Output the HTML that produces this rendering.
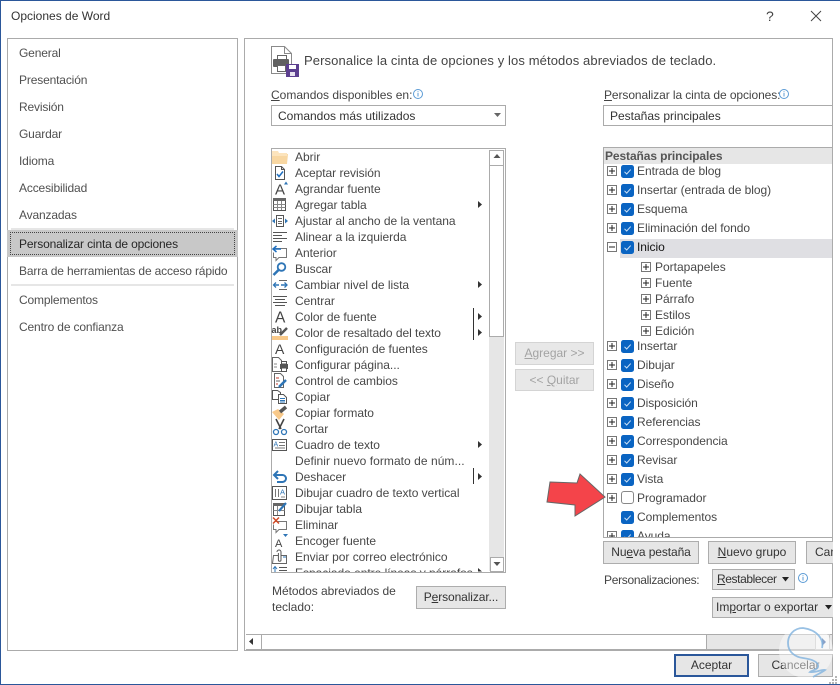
<!DOCTYPE html>
<html lang="es"><head><meta charset="utf-8"><title>Opciones de Word</title>
<style>
html,body{margin:0;padding:0;background:#fff}
#w{position:relative;width:840px;height:685px;overflow:hidden;background:#fff;font:12px/16px "Liberation Sans",sans-serif;color:#444}
#w div{position:absolute;box-sizing:border-box}
.t,.r,.n,.b{white-space:nowrap}
.t{height:16px}
.l{left:19px;height:16px;color:#505050;letter-spacing:-.15px}
.r{left:23px;height:16px;color:#484848;letter-spacing:-.03px}
.n{left:33px;height:16px;color:#484848;letter-spacing:-.05px}
.c{left:51px;height:16px;color:#484848}
.b{border:1px solid #adadad;background:#e6e6e6;color:#333;text-align:center;line-height:20px}
.box{border:1px solid #ababab;background:#fff}
u{text-decoration:underline}
svg{position:absolute;left:0;top:0}
</style></head><body><div id="w">
<div style="left:0;top:0;width:840px;height:1px;background:#2b579a"></div>
<div style="left:0;top:0;width:1px;height:685px;background:#2b579a"></div>
<div style="left:0;top:684px;width:840px;height:1px;background:#2b579a"></div>
<div class="t" style="left:11px;top:8px;color:#333">Opciones de Word</div>

<div class="box" style="left:7px;top:38px;width:231px;height:613px"></div>
<div style="left:11px;top:228px;width:223px;height:2px;background:#e6e6e6"></div>
<div style="left:7px;top:230px;width:231px;height:27px;background:#c8c8c8"></div>
<div style="left:10px;top:232px;width:225px;height:23px;border:1px dotted #444"></div>
<div style="left:11px;top:284px;width:223px;height:2px;background:#e6e6e6"></div>
<div class="t l" style="top:45px">General</div>
<div class="t l" style="top:72px">Presentación</div>
<div class="t l" style="top:99px">Revisión</div>
<div class="t l" style="top:126px">Guardar</div>
<div class="t l" style="top:153px">Idioma</div>
<div class="t l" style="top:180px">Accesibilidad</div>
<div class="t l" style="top:207px">Avanzadas</div>
<div class="t l" style="top:236px;color:#262626">Personalizar cinta de opciones</div>
<div class="t l" style="top:263px">Barra de herramientas de acceso rápido</div>
<div class="t l" style="top:292px">Complementos</div>
<div class="t l" style="top:319px">Centro de confianza</div>

<div class="box" style="left:244px;top:38px;width:589px;height:613px"></div>
<div class="t" style="left:304px;top:53px;font-size:13px;letter-spacing:.11px;color:#444">Personalice la cinta de opciones y los métodos abreviados de teclado.</div>
<div class="t" style="left:271px;top:87px"><u>C</u>omandos disponibles en:</div>
<div class="box" style="left:271px;top:105px;width:235px;height:21px"></div>
<div class="t" style="left:278px;top:108px;color:#333">Comandos más utilizados</div>

<div class="box" style="left:271px;top:148px;width:235px;height:425px"></div>
<div style="left:489px;top:150px;width:15px;height:421px;background:#e6e6e6"></div>
<div style="left:489px;top:150px;width:15px;height:16px;background:#fff;border:1px solid #ababab"></div>
<div style="left:489px;top:165px;width:15px;height:172px;background:#fff;border:1px solid #ababab"></div>
<div style="left:490px;top:557px;width:14px;height:15px;background:#fff;border:1px solid #ababab"></div>

<div style="left:272px;top:149px;width:216px;height:423px;overflow:hidden">
<div class="r" style="top:0">Abrir</div>
<div class="r" style="top:16px">Aceptar revisión</div>
<div class="r" style="top:32px">Agrandar fuente</div>
<div class="r" style="top:48px">Agregar tabla</div>
<div class="r" style="top:64px">Ajustar al ancho de la ventana</div>
<div class="r" style="top:80px">Alinear a la izquierda</div>
<div class="r" style="top:96px">Anterior</div>
<div class="r" style="top:112px">Buscar</div>
<div class="r" style="top:128px">Cambiar nivel de lista</div>
<div class="r" style="top:144px">Centrar</div>
<div class="r" style="top:160px">Color de fuente</div>
<div class="r" style="top:176px">Color de resaltado del texto</div>
<div class="r" style="top:192px">Configuración de fuentes</div>
<div class="r" style="top:208px">Configurar página...</div>
<div class="r" style="top:224px">Control de cambios</div>
<div class="r" style="top:240px">Copiar</div>
<div class="r" style="top:256px">Copiar formato</div>
<div class="r" style="top:272px">Cortar</div>
<div class="r" style="top:288px">Cuadro de texto</div>
<div class="r" style="top:304px;letter-spacing:.05px">Definir nuevo formato de núm...</div>
<div class="r" style="top:320px">Deshacer</div>
<div class="r" style="top:336px">Dibujar cuadro de texto vertical</div>
<div class="r" style="top:352px">Dibujar tabla</div>
<div class="r" style="top:368px">Eliminar</div>
<div class="r" style="top:384px">Encoger fuente</div>
<div class="r" style="top:400px">Enviar por correo electrónico</div>
<div class="r" style="top:416px">Espaciado entre líneas y párrafos</div>
</div>

<div class="b" style="left:515px;top:342px;width:79px;height:23px;color:#a3a3a3;border-color:#d4d4d4;background:#e8e8e8"><u>A</u>gregar &gt;&gt;</div>
<div class="b" style="left:515px;top:369px;width:79px;height:22px;color:#a3a3a3;border-color:#d4d4d4;background:#e8e8e8">&lt;&lt; <u>Q</u>uitar</div>

<div class="t" style="left:272px;top:583px;letter-spacing:-.05px">Métodos abreviados de</div>
<div class="t" style="left:272px;top:599px">teclado:</div>
<div class="b" style="left:416px;top:586px;width:90px;height:23px;letter-spacing:-.1px"><span>P<u>e</u>rsonalizar...</span></div>

<div class="t" style="left:604px;top:87px;letter-spacing:-.09px"><u>P</u>ersonalizar la cinta de opciones:</div>
<div class="box" style="left:603px;top:105px;width:230px;height:21px"></div>
<div class="t" style="left:610px;top:108px;color:#333">Pestañas principales</div>

<div style="left:603px;top:147px;width:230px;height:391px;border:1px solid #ababab;overflow:hidden;background:#fff">
<div style="left:0;top:0;width:228px;height:16px;background:#e6e6e6"></div>
<div class="t" style="left:1px;top:0;font-weight:bold;color:#555;letter-spacing:-.1px">Pestañas principales</div>
<div style="left:16px;top:91px;width:212px;height:19px;background:#dfdfe3"></div>
<div class="n" style="top:15px">Entrada de blog</div>
<div class="n" style="top:34px">Insertar (entrada de blog)</div>
<div class="n" style="top:53px">Esquema</div>
<div class="n" style="top:72px">Eliminación del fondo</div>
<div class="n" style="top:91px;color:#111">Inicio</div>
<div class="c" style="top:111px">Portapapeles</div>
<div class="c" style="top:127px">Fuente</div>
<div class="c" style="top:143px">Párrafo</div>
<div class="c" style="top:159px">Estilos</div>
<div class="c" style="top:175px">Edición</div>
<div class="n" style="top:190px">Insertar</div>
<div class="n" style="top:209px">Dibujar</div>
<div class="n" style="top:228px">Diseño</div>
<div class="n" style="top:247px">Disposición</div>
<div class="n" style="top:266px">Referencias</div>
<div class="n" style="top:285px">Correspondencia</div>
<div class="n" style="top:304px">Revisar</div>
<div class="n" style="top:323px">Vista</div>
<div class="n" style="top:342px">Programador</div>
<div class="n" style="top:361px">Complementos</div>
<div class="n" style="top:380px">Ayuda</div>
</div>

<div class="b" style="left:603px;top:541px;width:96px;height:23px;letter-spacing:-.1px">Nu<u>e</u>va pestaña</div>
<div class="b" style="left:708px;top:541px;width:88px;height:23px"><u>N</u>uevo grupo</div>
<div style="left:806px;top:541px;width:27px;height:23px;overflow:hidden;border:1px solid #adadad;border-right:0;background:#e6e6e6;color:#333;line-height:21px;padding-left:8px">Cambiar</div>
<div class="t" style="left:604px;top:572px;letter-spacing:-.3px">Personalizaciones:</div>
<div class="b" style="left:712px;top:569px;width:83px;height:21px;text-align:left;padding-left:4px;line-height:19px;letter-spacing:-.4px"><u>R</u>establecer</div>
<div style="left:712px;top:597px;width:121px;height:21px;overflow:hidden;border:1px solid #adadad;border-right:0;background:#e6e6e6;color:#333;line-height:19px;padding-left:3px;white-space:nowrap">Im<u>p</u>ortar o exportar</div>

<div style="left:246px;top:634px;width:586px;height:16px;background:#e6e6e6;border-top:1px solid #ababab;border-bottom:1px solid #ababab"></div>
<div style="left:246px;top:634px;width:15px;height:16px;background:#fff;border-top:1px solid #ababab;border-bottom:1px solid #ababab"></div>
<div style="left:261px;top:634px;width:446px;height:16px;background:#fff;border:1px solid #ababab"></div>
<div style="left:815px;top:634px;width:15px;height:16px;background:#f2f2f2;border:1px solid #c4c4c4"></div>

<div class="b" style="left:674px;top:654px;width:75px;height:23px;border:2px solid #2b579a;line-height:19px">Aceptar</div>
<div class="b" style="left:758px;top:654px;width:75px;height:23px;line-height:21px">Cancelar</div>

<svg width="840" height="685" viewBox="0 0 840 685" fill="none">
<defs>
<g id="ex"><rect x=".5" y=".5" width="9" height="9" fill="#fff" stroke="#777"/><path d="M2 5h6M5 2v6" stroke="#222"/></g>
<g id="mn"><rect x=".5" y=".5" width="9" height="9" fill="#fff" stroke="#777"/><path d="M2 5h6" stroke="#222"/></g>
<g id="ck"><rect x="0" y="0" width="13" height="13" rx="2.500" fill="#0a64c2"/><path d="M3.500 6.800l2.200 2.200 4-4.400" stroke="#cfe3f7" stroke-width="1"/></g>
<path id="ar" d="M0 0l4 3.500-4 3.500z" fill="#333"/>
<g id="inf"><circle cx="5" cy="5" r="4.500" stroke="#5b9bd5"/><path d="M5 4v3.500M5 2.200v1" stroke="#5b9bd5"/></g>
</defs>

<!-- window buttons -->
<text x="766" y="21" font-family="Liberation Sans" font-size="14" fill="#444">?</text>
<path d="M811 11l10 10M821 11l-10 10" stroke="#444"/>

<!-- header icon -->
<path d="M271.500 46.500h13l7 7v20h-20z" fill="#fff" stroke="#8a8a8a"/>
<path d="M284.500 46.500v7h7" stroke="#8a8a8a"/>
<rect x="277.500" y="55.500" width="9" height="4" fill="#fff" stroke="#666"/>
<rect x="273" y="59" width="16" height="8" rx="1" fill="#606060"/>
<rect x="277.500" y="65.500" width="8" height="6" fill="#fff" stroke="#666"/>
<rect x="286" y="64" width="13" height="13" fill="#5c3f8f"/>
<rect x="289" y="65" width="7" height="4" fill="#fff"/>
<rect x="290" y="72" width="5" height="4" fill="#e8e3f0"/>

<!-- dropdown arrows -->
<path d="M494 113h7l-3.500 4z" fill="#666"/>
<path d="M493.500 158l3.500-4 3.500 4z" fill="#555"/>
<path d="M493.500 562h7l-3.500 4z" fill="#555"/>
<path d="M782 577h7l-3.500 4.500z" fill="#222"/>
<path d="M825 605h7l-3.500 4.500z" fill="#222"/>
<path d="M253 638l-4 3.500 4 3.500" fill="#333"/>
<path d="M822 638l4 4-4 4z" fill="#2b579a"/>
<use href="#inf" x="413" y="89"/>
<use href="#inf" x="779" y="89"/>
<use href="#inf" x="798" y="573"/>

<!-- list submenu arrows -->
<use href="#ar" x="478" y="201"/>
<use href="#ar" x="478" y="281"/>
<use href="#ar" x="478" y="313"/>
<use href="#ar" x="478" y="329"/>
<use href="#ar" x="478" y="441"/>
<use href="#ar" x="478" y="473"/>
<path d="M478 568l4 3.500h-4z" fill="#333"/>
<path d="M473.500 308v32M473.500 468v16" stroke="#333"/>

<!-- list icons -->
<g transform="translate(272,149)"><path d="M0 3h6l1 2h9l-1 10H0z" fill="#f8d7a2"/><path d="M0 7V2h6l1 2h8v3z" fill="#fce4bd"/></g>
<g transform="translate(272,165)"><path d="M3.500 1.500h6l3 3v10h-9z" fill="#fff" stroke="#555"/><path d="M9.500 1.500v3h3" stroke="#555"/><path d="M5 9l2 2.500 4-5" stroke="#1f6fbf" stroke-width="1.500"/></g>
<g transform="translate(272,181)"><text x="3" y="13.500" font-family="Liberation Sans" font-size="15" fill="#444">A</text><path d="M12 3.500l2-3 2 3z" fill="#2e75b6"/></g>
<g transform="translate(272,197)"><rect x="1.500" y="1.500" width="12" height="12" fill="#fff" stroke="#555"/><rect x="1" y="1" width="13" height="3" fill="#666"/><path d="M1.500 7.500h12M1.500 10.500h12M5.500 4v9M9.500 4v9" stroke="#888"/></g>
<g transform="translate(272,213)"><path d="M3 5.500L0 8l3 2.500zM13 5.500L16 8l-3 2.500z" fill="#2e75b6"/><rect x="4.500" y="2.500" width="7" height="11" fill="#fff" stroke="#555"/><path d="M6 5.500h4M6 8.500h4M6 10.500h4" stroke="#666"/></g>
<path transform="translate(272,229)" d="M1 3.500h14M1 6.500h9M1 9.500h14M1 12.500h9" stroke="#555"/>
<g transform="translate(272,245)"><path d="M3 3.500h11.500v9H7l-3 3v-3H1.500v-5" fill="#fff" stroke="#777"/><path d="M1 4h8" stroke="#1f6fbf" stroke-width="1.500"/><path d="M4.500 1L1 4l3.500 3" stroke="#1f6fbf" stroke-width="1.500"/></g>
<g transform="translate(272,261)"><circle cx="9.500" cy="6" r="3.800" stroke="#2e75b6" stroke-width="1.800"/><path d="M6.500 9l-5 5" stroke="#2e75b6" stroke-width="2.500"/></g>
<g transform="translate(272,277)"><path d="M7 3.500h8M7 12.500h8" stroke="#666"/><path d="M2 8h5M9 8h6" stroke="#2e75b6" stroke-width="1.400"/><path d="M4 5.500L1.500 8 4 10.500M12.500 5.500L15 8l-2.500 2.500" stroke="#2e75b6" stroke-width="1.300"/></g>
<path transform="translate(272,293)" d="M1 3.500h14M3 6.500h10M1 9.500h14M3 12.500h10" stroke="#555"/>
<g transform="translate(272,309)"><text x="3" y="13.500" font-family="Liberation Sans" font-size="15.500" fill="#444">A</text></g>
<g transform="translate(272,325)"><rect x="0" y="11" width="16" height="4" fill="#f8c98a"/><text x="-.5" y="8" font-family="Liberation Sans" font-size="9" font-weight="bold" fill="#444">ab</text><path d="M8 10l7-7" stroke="#555" stroke-width="2.500"/></g>
<g transform="translate(272,341)"><text x="3" y="13" font-family="Liberation Sans" font-size="14" fill="#444">A</text></g>
<g transform="translate(272,357)"><path d="M.5.500h6l3 3v11h-9z" fill="#fff" stroke="#666"/><rect x="8" y="7" width="8" height="5" fill="#555"/><rect x="9.500" y="4.500" width="5" height="2.500" fill="#fff" stroke="#555"/><rect x="9.500" y="11" width="5" height="3.500" fill="#fff" stroke="#555"/><path d="M2 7h3M2 10h3" stroke="#888"/></g>
<g transform="translate(272,373)"><path d="M2.500.5h6l3 3v11h-9z" fill="#fff" stroke="#666"/><path d="M4 5h3" stroke="#c0392b"/><path d="M4 8h4" stroke="#666"/><path d="M4 11h2" stroke="#c0392b"/><path d="M7 14l7-7" stroke="#2e75b6" stroke-width="2.500"/></g>
<g transform="translate(272,389)"><path d="M.5 1.500h5l3 2v7h-8z" fill="#fff" stroke="#555"/><path d="M6.500 5.500h5l3 3v6h-8z" fill="#fff" stroke="#555"/><path d="M8 9.500h5M8 11.500h5M8 13h5" stroke="#2e75b6"/></g>
<g transform="translate(272,405)"><path d="M0 7l6-3 6 5-5 6z" fill="#f8c98a"/><path d="M8 7l6-5" stroke="#555" stroke-width="3.500"/></g>
<g transform="translate(272,421)"><path d="M4-2l5 10M12-2L7 8" stroke="#444" stroke-width="1.600"/><circle cx="4" cy="11" r="2.500" stroke="#2e75b6" stroke-width="1.300"/><circle cx="12" cy="11" r="2.500" stroke="#2e75b6" stroke-width="1.300"/></g>
<g transform="translate(272,437)"><rect x=".5" y="2.500" width="14" height="11" fill="#fff" stroke="#555"/><text x="1.500" y="9.500" font-family="Liberation Sans" font-size="7" fill="#2e75b6">A</text><path d="M7 5.500h6M7 8.500h6M3 11h10" stroke="#777"/></g>
<g transform="translate(272,469)"><path d="M3 6h7.500a3.500 3.500 0 0 1 0 7H5" stroke="#2e75b6" stroke-width="2"/><path d="M6 2L2 6l4 4" stroke="#2e75b6" stroke-width="2"/></g>
<g transform="translate(272,485)"><rect x=".5" y="1.500" width="14" height="13" fill="#fff" stroke="#555"/><path d="M3.500 4v8M6.500 4v8" stroke="#777"/><text x="8" y="9.500" font-family="Liberation Sans" font-size="7.500" fill="#2e75b6">A</text><path d="M9 12h4" stroke="#888"/></g>
<g transform="translate(272,501)"><rect x="1.500" y="2.500" width="11" height="12" fill="#fff" stroke="#555"/><rect x="1" y="2" width="12" height="3" fill="#666"/><path d="M5.500 5v9M1.500 9.500h11" stroke="#888"/><path d="M7 10l7-8" stroke="#2e75b6" stroke-width="2.200"/></g>
<g transform="translate(272,517)"><path d="M3 4.500h11.500v8H7l-3 3v-3H1.500v-5" fill="#fff" stroke="#777"/><path d="M1 .5l6 6M7 .5l-6 6" stroke="#d04a26" stroke-width="1.500"/></g>
<g transform="translate(272,533)"><text x="3" y="14" font-family="Liberation Sans" font-size="11" fill="#444">A</text><path d="M11 1h5l-2.500 3z" fill="#2e75b6"/></g>
<g transform="translate(272,549)"><path d="M1.500 6.500h13v8h-14z" fill="#fff" stroke="#666"/><path d="M5 3a2 2 0 0 1 4 0v8a1.300 1.300 0 0 1-2.600 0V4" fill="#fff" stroke="#555"/><path d="M11 8h3" stroke="#2e75b6"/></g>
<g transform="translate(272,565)"><path d="M3 7V2M1 4l2-2.500L5 4" stroke="#2e75b6"/><path d="M7 2.500h8M7 5.500h8" stroke="#555"/></g>

<!-- tree -->
<use href="#ex" x="607" y="166"/><use href="#ck" x="621" y="165"/>
<use href="#ex" x="607" y="185"/><use href="#ck" x="621" y="184"/>
<use href="#ex" x="607" y="204"/><use href="#ck" x="621" y="203"/>
<use href="#ex" x="607" y="223"/><use href="#ck" x="621" y="222"/>
<use href="#mn" x="607" y="242"/><use href="#ck" x="621" y="241"/>
<use href="#ex" x="641" y="262"/><use href="#ex" x="641" y="278"/><use href="#ex" x="641" y="294"/><use href="#ex" x="641" y="310"/><use href="#ex" x="641" y="326"/>
<use href="#ex" x="607" y="341"/><use href="#ck" x="621" y="340"/>
<use href="#ex" x="607" y="360"/><use href="#ck" x="621" y="359"/>
<use href="#ex" x="607" y="379"/><use href="#ck" x="621" y="378"/>
<use href="#ex" x="607" y="398"/><use href="#ck" x="621" y="397"/>
<use href="#ex" x="607" y="417"/><use href="#ck" x="621" y="416"/>
<use href="#ex" x="607" y="436"/><use href="#ck" x="621" y="435"/>
<use href="#ex" x="607" y="455"/><use href="#ck" x="621" y="454"/>
<use href="#ex" x="607" y="474"/><use href="#ck" x="621" y="473"/>
<use href="#ex" x="607" y="493"/><rect x="621.500" y="491.500" width="12" height="12" rx="2.500" fill="#fff" stroke="#888"/>
<use href="#ck" x="621" y="511"/>
<svg x="600" y="528" width="232" height="9"><use href="#ex" x="7" y="3"/><use href="#ck" x="21" y="2"/></svg>

<!-- red arrow -->
<path d="M550 482l27 1 3-9 25 23-30 19v-11l-28-3z" fill="#f4444a" stroke="#666" stroke-width="1"/>

<!-- watermark -->
<circle cx="806" cy="651" r="27" fill="#fff" fill-opacity=".45"/>
<path d="M822 648C824 640 818 630 803 628 794 628 788 635 788 643 788 652 795 657 803 658 810 659 817 661 818 665 819 670 812 670 810 672 816 673 822 669 825 670 821 673 816 675 813 677" stroke="#7fb2dd" stroke-width="1.800" stroke-opacity=".8"/>

<!-- grip -->
<path d="M835 676h2v2h-2zM832 679h2v2h-2zM835 679h2v2h-2zM829 682h2v2h-2zM832 682h2v2h-2zM835 682h2v2h-2z" fill="#b5b5b5"/>
</svg>
</div></body></html>
